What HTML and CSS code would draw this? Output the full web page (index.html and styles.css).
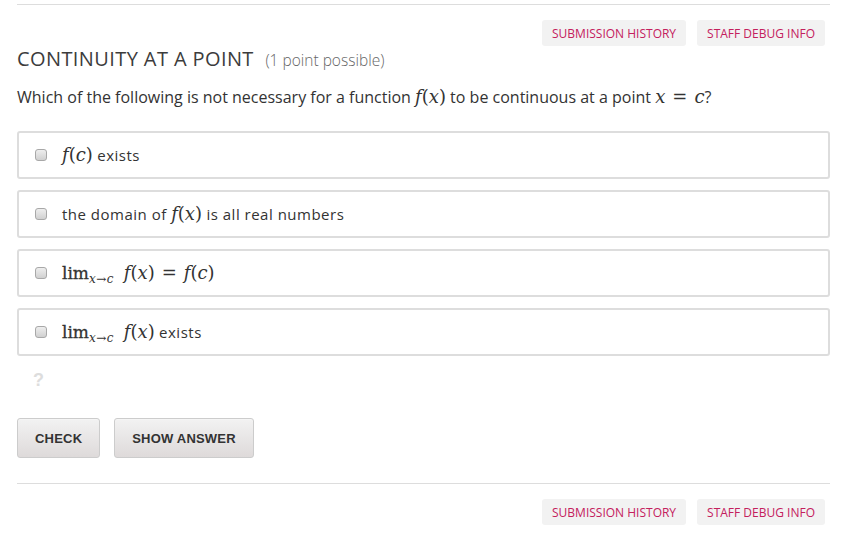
FILE: index.html
```html
<!DOCTYPE html>
<html>
<head>
<meta charset="utf-8">
<link rel="stylesheet" href="styles.css">
</head>
<body>
<div class="page">
  <hr class="rule top-rule">
  <div class="actions">
    <span class="pill">SUBMISSION HISTORY</span>
    <span class="pill">STAFF DEBUG INFO</span>
  </div>
  <h2 class="title">CONTINUITY AT A POINT <span class="points">(1 point possible)</span></h2>
  <p class="question">Which of the following is not necessary for a function <span class="m"><i>f</i>(<i>x</i>)</span> to be continuous at a point <span class="m"><i>x</i><span class="op">=</span><i>c</i></span>?</p>
  <div class="choices">
    <label class="choice"><span class="box"></span><span class="ctext"><span class="m"><i>f</i>(<i>c</i>)</span> exists</span></label>
    <label class="choice"><span class="box"></span><span class="ctext">the domain of <span class="m"><i>f</i>(<i>x</i>)</span> is all real numbers</span></label>
    <label class="choice"><span class="box"></span><span class="ctext"><span class="m"><span class="lim">lim</span><sub><i>x</i>→<i>c</i></sub> <i>f</i>(<i>x</i>)<span class="op">=</span><i>f</i>(<i>c</i>)</span></span></label>
    <label class="choice"><span class="box"></span><span class="ctext"><span class="m"><span class="lim">lim</span><sub><i>x</i>→<i>c</i></sub> <i>f</i>(<i>x</i>)</span> exists</span></label>
  </div>
  <div class="unanswered">?</div>
  <div class="buttons">
    <button class="btn">CHECK</button>
    <button class="btn">SHOW ANSWER</button>
  </div>
  <hr class="rule bottom-rule">
  <div class="actions">
    <span class="pill">SUBMISSION HISTORY</span>
    <span class="pill">STAFF DEBUG INFO</span>
  </div>
</div>
</body>
</html>
```

FILE: styles.css
```css
* { box-sizing: border-box; }
html, body { margin: 0; padding: 0; background: #fff; }
body { font-family: "Open Sans", "DejaVu Sans", sans-serif; color: #3c3c3c; }
.page { width: 813px; margin-left: 17px; padding-top: 4px; }
.rule { border: 0; border-top: 1px solid #ddd; margin: 0; height: 0; }
.actions { display: flex; justify-content: flex-end; gap: 11px; padding-right: 5px; margin-top: 15px; }
.pill { display: inline-flex; align-items: center; height: 26px; padding: 0 10px; background: #f2f2f2; border-radius: 3px; color: #c4205d; font-size: 12px; }
.title { margin: 0; font-weight: 400; font-size: 20px; letter-spacing: 0.4px; color: #3c3c3c; line-height: 26px; }
.points { font-size: 15.5px; font-weight: 300; letter-spacing: 0; color: #666; margin-left: 6px; }
.question { margin: 12px 0 0; font-size: 16px; line-height: 24px; color: #333; }
.m { font-family: "DejaVu Serif", "Liberation Serif", serif; font-size: 18px; letter-spacing: 0; line-height: 1; }
.m i { font-style: italic; }
.op { margin: 0 7px; font-style: normal; }
.lim { font-size: 17px; font-weight: 400; -webkit-text-stroke: 0.3px #333; }
.m sub { font-size: 12px; vertical-align: -4px; line-height: 0; margin-right: 4px; letter-spacing: 0.5px; }
.choices { margin-top: 22px; display: flex; flex-direction: column; gap: 11px; }
.choice { display: flex; align-items: center; height: 48px; border: 2px solid #ddd; border-radius: 3px; padding-left: 16px; }
.box { width: 12px; height: 12px; border: 1px solid #a8a8a8; border-radius: 3px; background: linear-gradient(#eee, #d0d0d0); margin-right: 15px; flex: none; }
.ctext { font-size: 15px; letter-spacing: 0.5px; color: #333; }
.unanswered { margin: 14px 0 0 16px; font-family: "Liberation Sans", Arial, sans-serif; font-weight: 700; font-size: 18px; color: #ddd; line-height: 20px; }
.buttons { display: flex; gap: 14px; margin-top: 28px; }
.btn { height: 40px; padding: 0 17px; border: 1px solid #ccc; border-radius: 3px; background: linear-gradient(#f2f2f2, #dedada); font-family: "Liberation Sans", Arial, sans-serif; font-weight: 700; font-size: 13px; letter-spacing: 0.2px; color: #333; box-shadow: 0 1px 0 #f5f5f5 inset; }
.bottom-rule { margin-top: 25px; }
```
